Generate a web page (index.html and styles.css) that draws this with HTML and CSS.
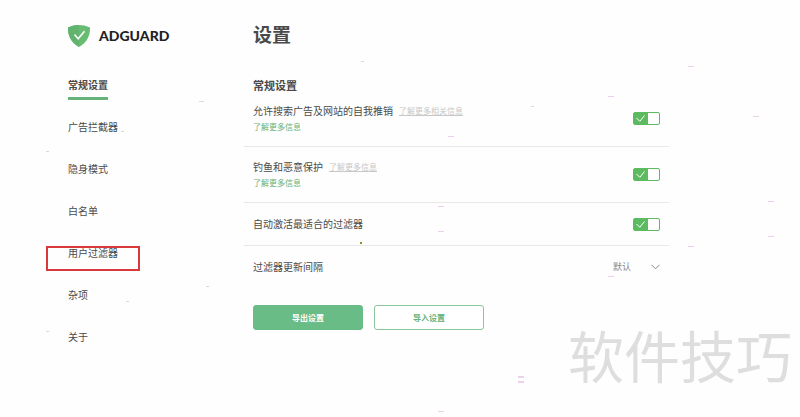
FILE: index.html
```html
<!DOCTYPE html>
<html lang="zh-CN">
<head>
  <meta charset="UTF-8">
  <meta name="viewport" content="width=device-width, initial-scale=1.0">
  <title>设置</title>
  <link rel="stylesheet" href="styles.css">
</head>
<body>
  <div class="page">
    <aside class="sidebar">
      <div class="logo">
        <svg width="22" height="22" viewBox="0 0 22 22">
          <path d="M11 0C7.600 0 3.500.800 0 2.600 0 6.400 0 15.800 11 22 22 15.800 22 6.400 22 2.600 18.500.800 14.400 0 11 0z" fill="#68bc71"/>
          <path d="M11 0v22C0 15.800 0 6.400 0 2.600 3.500.800 7.600 0 11 0z" fill="#62b36d"/>
          <path d="M6.500 9.500l3.700 4.300 6.300-7.500" fill="none" stroke="#fff" stroke-width="1.600"/>
        </svg>
        <span class="logo-text">ADGUARD</span>
      </div>
      <nav>
        <ul class="menu">
          <li><a href="#" class="active">常规设置</a></li>
          <li><a href="#">广告拦截器</a></li>
          <li><a href="#">隐身模式</a></li>
          <li><a href="#">白名单</a></li>
          <li class="marked"><a href="#">用户过滤器</a></li>
          <li><a href="#">杂项</a></li>
          <li><a href="#">关于</a></li>
        </ul>
      </nav>
    </aside>

    <main class="content">
      <h1>设置</h1>
      <h2>常规设置</h2>
      <div class="row">
        <div>
          <div class="line"><label for="ads">允许搜索广告及网站的自我推销</label><a href="#" class="hint">了解更多相关信息</a></div>
          <a href="#" class="more">了解更多信息</a>
        </div>
        <div class="switch">
          <input type="checkbox" id="ads" checked>
          <svg width="9" height="7" viewBox="0 0 9 7"><path d="M.5 3l3.300 3.300L8.500.500"/></svg>
        </div>
      </div>
      <div class="row">
        <div>
          <div class="line"><label for="phishing">钓鱼和恶意保护</label><a href="#" class="hint">了解更多信息</a></div>
          <a href="#" class="more">了解更多信息</a>
        </div>
        <div class="switch">
          <input type="checkbox" id="phishing" checked>
          <svg width="9" height="7" viewBox="0 0 9 7"><path d="M.5 3l3.300 3.300L8.500.500"/></svg>
        </div>
      </div>
      <div class="row small">
        <label for="auto">自动激活最适合的过滤器</label>
        <div class="switch">
          <input type="checkbox" id="auto" checked>
          <svg width="9" height="7" viewBox="0 0 9 7"><path d="M.5 3l3.300 3.300L8.500.500"/></svg>
        </div>
      </div>
      <div class="row small last">
        <label for="period">过滤器更新间隔</label>
        <div class="dropdown">
          <select id="period"><option>默认</option></select>
          <svg width="9" height="6" viewBox="0 0 9 6"><path d="M.5.800l4 4 4-4"/></svg>
        </div>
      </div>
      <div class="buttons">
        <button class="btn filled">导出设置</button>
        <button class="btn">导入设置</button>
      </div>
    </main>
  </div>

  <svg class="specks" width="800" height="417" viewBox="0 0 800 417">
    <g fill="#ead2ec">
      <path d="M199 101h5v1h-5zM688 66h6v1h-6zM608 96h6v1h-6zM753 116h6v1h-6zM448 136h6v1h-6z"/>
      <path d="M438 206h6v1h-6zM438 231h6v1h-6zM768 201h6v1h-6zM768 236h6v1h-6zM688 246h6v1h-6zM608 276h6v1h-6z"/>
      <path d="M518 376h6v2h-6zM518 381h6v2h-6zM438 411h6v1h-6z"/>
    </g>
    <path fill="#d8d8d8" d="M46 151h3v1h-3zM121 131h3v1h-3zM206 286h3v1h-3zM126 301h3v1h-3zM46 331h3v1h-3zM361 61h3v1h-3zM531 106h3v1h-3z"/>
    <path fill="#7d9a2c" d="M360 242h2v2h-2z"/>
  </svg>
  <div class="watermark">软件技巧</div>
</body>
</html>
```
FILE: styles.css
```css
*, *::before, *::after { box-sizing: border-box; }
body {
  margin: 0;
  background-color: #fefefe;
  color: #4a4a4a;
  font-family: "Noto Sans CJK SC", sans-serif;
  font-size: 10px;
  line-height: 16px;
}
a { color: inherit; text-decoration: none; }

.page {
  display: flex;
  padding: 22px 131px 0 68px;
}
.sidebar { width: 176px; flex-shrink: 0; }
.logo {
  display: flex;
  align-items: center;
  gap: 9px;
  height: 28px;
}
.logo-text {
  font-family: Lato, sans-serif;
  font-size: 14px;
  font-weight: 900;
  color: #222;
}
.menu {
  list-style: none;
  margin: 14px 0 0;
  padding: 0;
}
.menu li {
  display: flex;
  align-items: center;
  height: 42px;
  position: relative;
}
.menu .active {
  font-weight: bold;
  position: relative;
}
.menu .active::after {
  content: "";
  position: absolute;
  left: 0;
  right: 0;
  bottom: -7px;
  height: 3px;
  background-color: #67b279;
}
/* red frame round the user filter item */
.marked::before {
  content: "";
  position: absolute;
  left: -22px;
  top: 14px;
  width: 94px;
  height: 25px;
  border: 2px solid #d9393b;
}

.content { flex: 1; }
h1, h2 { margin: 0; padding-left: 9px; }
h1 { font-size: 19px; line-height: 24px; }
h2 { font-size: 11px; line-height: 12px; margin-top: 33px; }
.row {
  display: flex;
  align-items: center;
  justify-content: space-between;
  height: 56px;
  padding: 0 9px;
  border-bottom: 1px solid #e8e8e8;
}
.small { height: 43px; }
.last { height: 42px; border-bottom: none; }
.line { display: flex; gap: 6px; }
.hint {
  font-size: 8px;
  color: #c8c8c8;
  text-decoration: underline;
}
.more {
  display: block;
  font-size: 8px;
  color: #67b279;
}

.switch, .dropdown { position: relative; display: flex; }
.switch input {
  appearance: none;
  margin: 0;
  width: 27px;
  height: 13px;
  border: 1px solid #5cba60;
  border-radius: 2px;
  background: linear-gradient(to right, #5cba60 14px, #fff 14px);
}
.switch svg {
  position: absolute;
  left: 3px;
  top: 3px;
  pointer-events: none;
}
.switch path { fill: none; stroke: #fff; }
.dropdown select {
  appearance: none;
  width: 47px;
  padding: 0;
  border: none;
  background: none;
  font: inherit;
  font-size: 9px;
  color: #888;
}
.dropdown svg {
  position: absolute;
  right: 0;
  top: 5px;
  pointer-events: none;
}
.dropdown path { fill: none; stroke: #888; }

.buttons {
  display: flex;
  gap: 11px;
  padding: 17px 9px 0;
}
.btn {
  width: 110px;
  height: 25px;
  padding: 0;
  border: 1px solid #8ac79d;
  border-radius: 3px;
  background-color: #fff;
  color: #67b279;
  font: inherit;
  font-size: 8px;
  font-weight: bold;
}
.filled {
  border-color: #69bc86;
  background-color: #69bc86;
  color: #fff;
}

.specks {
  position: absolute;
  left: 0;
  top: 0;
  pointer-events: none;
}
.watermark {
  position: absolute;
  right: 8px;
  top: 322px;
  font-size: 56px;
  line-height: 64px;
  color: #dedede;
}
```
